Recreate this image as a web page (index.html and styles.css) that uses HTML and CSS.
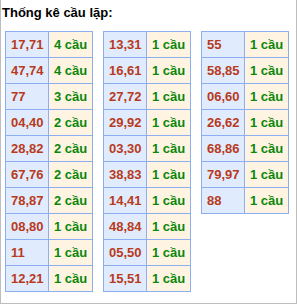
FILE: index.html
```html
<!DOCTYPE html>
<html lang="vi">
<head>
<meta charset="utf-8">
<link rel="stylesheet" href="styles.css">
</head>
<body>
<div class="box">
  <div class="title">Thống kê cầu lặp:</div>
  <div class="tables">
    <table class="tk">
      <tr><td class="n">17,71</td><td class="c">4 cầu</td></tr>
      <tr><td class="n">47,74</td><td class="c">4 cầu</td></tr>
      <tr><td class="n">77</td><td class="c">3 cầu</td></tr>
      <tr><td class="n">04,40</td><td class="c">2 cầu</td></tr>
      <tr><td class="n">28,82</td><td class="c">2 cầu</td></tr>
      <tr><td class="n">67,76</td><td class="c">2 cầu</td></tr>
      <tr><td class="n">78,87</td><td class="c">2 cầu</td></tr>
      <tr><td class="n">08,80</td><td class="c">1 cầu</td></tr>
      <tr><td class="n">11</td><td class="c">1 cầu</td></tr>
      <tr><td class="n">12,21</td><td class="c">1 cầu</td></tr>
    </table>
    <table class="tk">
      <tr><td class="n">13,31</td><td class="c">1 cầu</td></tr>
      <tr><td class="n">16,61</td><td class="c">1 cầu</td></tr>
      <tr><td class="n">27,72</td><td class="c">1 cầu</td></tr>
      <tr><td class="n">29,92</td><td class="c">1 cầu</td></tr>
      <tr><td class="n">03,30</td><td class="c">1 cầu</td></tr>
      <tr><td class="n">38,83</td><td class="c">1 cầu</td></tr>
      <tr><td class="n">14,41</td><td class="c">1 cầu</td></tr>
      <tr><td class="n">48,84</td><td class="c">1 cầu</td></tr>
      <tr><td class="n">05,50</td><td class="c">1 cầu</td></tr>
      <tr><td class="n">15,51</td><td class="c">1 cầu</td></tr>
    </table>
    <table class="tk">
      <tr><td class="n">55</td><td class="c">1 cầu</td></tr>
      <tr><td class="n">58,85</td><td class="c">1 cầu</td></tr>
      <tr><td class="n">06,60</td><td class="c">1 cầu</td></tr>
      <tr><td class="n">26,62</td><td class="c">1 cầu</td></tr>
      <tr><td class="n">68,86</td><td class="c">1 cầu</td></tr>
      <tr><td class="n">79,97</td><td class="c">1 cầu</td></tr>
      <tr><td class="n">88</td><td class="c">1 cầu</td></tr>
    </table>
  </div>
</div>
</body>
</html>
```
FILE: styles.css
```css
html, body {
  margin: 0;
  padding: 0;
  background: #ffffff;
}
body {
  font-family: "Liberation Sans", Arial, sans-serif;
}
.box {
  width: 297px;
  height: 304px;
  box-sizing: border-box;
  border: 1px solid #bdbdbd;
  border-top: none;
  background: #ffffff;
}
.title {
  font-weight: bold;
  font-size: 13px;
  line-height: 15px;
  color: #000000;
  padding: 5px 0 0 1px;
  height: 26px;
  box-sizing: border-box;
}
.tables {
  display: flex;
  align-items: flex-start;
  gap: 10px;
  padding: 5px 0 0 4px;
}
.tk {
  border-collapse: collapse;
}
.tk td {
  border: 1px solid #8eaef2;
  height: 25px;
  padding: 0 0 0 5px;
  font-size: 13px;
  font-weight: bold;
  line-height: 15px;
  white-space: nowrap;
  vertical-align: middle;
}
.tk td.n {
  width: 37px;
  background: #e0ecfd;
  color: #b83a1c;
}
.tk td.c {
  width: 38px;
  background: #fff4e1;
  color: #0a870a;
}
```
